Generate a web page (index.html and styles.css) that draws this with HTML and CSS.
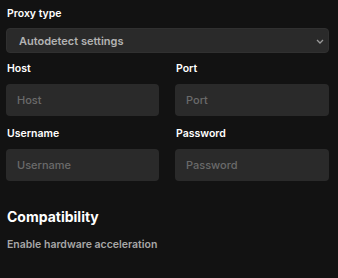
FILE: index.html
```
<!DOCTYPE html>
<html>
<head>
<meta charset="utf-8">
<link rel="stylesheet" href="styles.css">
</head>
<body>
<div class="page">
  <div class="field">
    <label class="label">Proxy type</label>
    <div class="select">
      <span>Autodetect settings</span>
      <svg class="chev" width="8" height="5" viewBox="0 0 8 5"><path d="M1 1l3 3 3-3" fill="none" stroke="#9a9a9a" stroke-width="1.3"/></svg>
    </div>
  </div>
  <div class="grid">
    <div class="field">
      <label class="label">Host</label>
      <div class="input">Host</div>
    </div>
    <div class="field">
      <label class="label">Port</label>
      <div class="input">Port</div>
    </div>
    <div class="field">
      <label class="label">Username</label>
      <div class="input">Username</div>
    </div>
    <div class="field">
      <label class="label">Password</label>
      <div class="input">Password</div>
    </div>
  </div>
  <h2 class="heading">Compatibility</h2>
  <div class="row">Enable hardware acceleration</div>
</div>
</body>
</html>
```
FILE: styles.css
```
html, body {
  margin: 0;
  padding: 0;
  background: #121212;
}
.page {
  padding: 6px 9px 0 6px;
  font-family: "Inter", "Liberation Sans", sans-serif;
  color: #fff;
}
.field {
  display: flex;
  flex-direction: column;
}
.label {
  font-size: 10.5px;
  font-weight: 600;
  line-height: 16px;
  padding-left: 1px;
  height: 16px;
}
.select {
  margin-top: 6px;
  height: 25px;
  box-sizing: border-box;
  background: #2a2a2a;
  border: 1px solid #303030;
  border-radius: 4px;
  display: flex;
  align-items: center;
  justify-content: space-between;
  padding: 0 4px 0 12px;
  font-size: 11px;
  font-weight: 600;
  color: #b3b3b3;
}
.chev { margin-top: 1px; }
.grid {
  display: grid;
  grid-template-columns: 153px 154px;
  column-gap: 16px;
  row-gap: 10px;
  margin-top: 8px;
}
.grid .input {
  margin-top: 7px;
}
.input {
  height: 32px;
  box-sizing: border-box;
  background: #2a2a2a;
  border-radius: 4px;
  display: flex;
  align-items: center;
  padding-left: 11px;
  font-size: 11px;
  color: #6a6a6a;
  font-weight: 500;
}
.heading {
  margin: 26px 0 0;
  font-size: 14px;
  font-weight: 700;
  line-height: 20px;
  padding-left: 1px;
}
.row {
  margin-top: 10px;
  font-size: 10.5px;
  font-weight: 600;
  color: #a7a7a7;
  padding-left: 1px;
  line-height: 16px;
}
```
